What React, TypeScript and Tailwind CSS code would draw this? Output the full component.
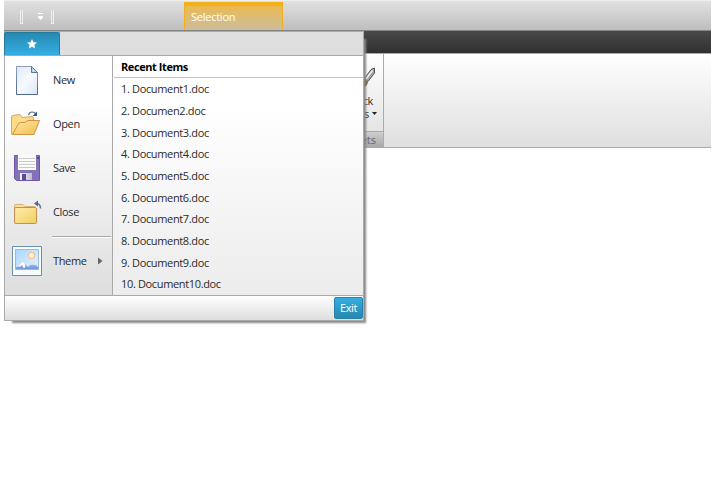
import React from 'react';

const documents = [
  'Document1.doc', 'Documen2.doc', 'Document3.doc', 'Document4.doc', 'Document5.doc',
  'Document6.doc', 'Document7.doc', 'Document8.doc', 'Document9.doc', 'Document10.doc',
];

function NewIcon() {
  return (
    <svg width="32" height="32" viewBox="0 0 32 32">
      <defs>
        <linearGradient id="page" x1="0" y1="0" x2="1" y2="1">
          <stop offset="0" stopColor="#dce8f8" /><stop offset=".5" stopColor="#f7faff" /><stop offset="1" stopColor="#d9e5f6" />
        </linearGradient>
        <linearGradient id="pageEdge" x1="0" y1="0" x2="0" y2="1">
          <stop offset="0" stopColor="#8aa0ba" /><stop offset="1" stopColor="#4d6a8d" />
        </linearGradient>
      </defs>
      <path d="M5.500 2.500H20.500L26.500 8.500V30.500H5.500Z" fill="url(#page)" stroke="url(#pageEdge)" />
      <path d="M20.500 2.500V8.500H26.500Z" fill="#b9daf2" stroke="#5c7898" />
    </svg>
  );
}

function OpenIcon() {
  return (
    <svg width="32" height="32" viewBox="0 0 32 32">
      <defs>
        <linearGradient id="openFront" x1="0" y1="0" x2="1" y2="1">
          <stop offset="0" stopColor="#ffe9a0" /><stop offset="1" stopColor="#f0bd52" />
        </linearGradient>
      </defs>
      <path d="M.500 26V9Q.500 7.500 2 7.500L9 6.500L11 9.500L21 8.500Q22.500 8.500 22.500 11V25Z" fill="#fadb88" stroke="#d8a866" />
      <path d="M1.500 26.500L7 16.500Q8 14.500 10 14.500H14L17 12.500H28.500L23 26.500Z" fill="url(#openFront)" stroke="#cf9448" />
      <path d="M17.500 7Q18.500 4 21 4Q23.500 4 25 6" fill="none" stroke="#5a7596" strokeWidth="1.200" />
      <path d="M26 3.500V8H21.500Z" fill="#39577f" />
    </svg>
  );
}

function SaveIcon() {
  return (
    <svg width="32" height="32" viewBox="0 0 32 32">
      <defs>
        <linearGradient id="disk" x1="0" y1="0" x2="0" y2="1">
          <stop offset="0" stopColor="#8573b9" /><stop offset="1" stopColor="#8370ba" />
        </linearGradient>
        <linearGradient id="shutter" x1="0" y1="0" x2="1" y2="0">
          <stop offset="0" stopColor="#f2f2f5" /><stop offset="1" stopColor="#bdbdc6" />
        </linearGradient>
      </defs>
      <path d="M3.500 3.500H28.500V28.500H5.500L3.500 26.500Z" fill="url(#disk)" stroke="#6d56a9" />
      <path d="M7 3H25V18H7Z" fill="#fafafa" />
      <path d="M8 6.500H24M8 9.500H24M8 12.500H24M8 15.500H24" stroke="#cacacc" />
      <path d="M9 21H21V28H9Z" fill="url(#shutter)" />
      <path d="M11 22H15V28H11Z" fill="#5c4998" />
      <path d="M26 5H28V7H26Z" fill="#58448d" />
    </svg>
  );
}

function CloseIcon() {
  return (
    <svg width="32" height="32" viewBox="0 0 32 32">
      <defs>
        <linearGradient id="closed" x1="0" y1="0" x2="1" y2="1">
          <stop offset="0" stopColor="#ffebaa" /><stop offset="1" stopColor="#f2cf62" />
        </linearGradient>
      </defs>
      <path d="M3.500 27V10Q3.500 8.500 5 8.500H12L14 10.500H24V27Z" fill="#f9dfa0" stroke="#d8b078" />
      <path d="M3.500 13Q3.500 11.500 5 11.500H24.500Q25.500 11.500 25.500 13V26.500Q25.500 27.500 24.500 27.500H4.500Q3.500 27.500 3.500 26.500Z" fill="url(#closed)" stroke="#c78e51" />
      <path d="M29.500 12.500Q29.500 7.500 25 7.500" fill="none" stroke="#5f7897" strokeWidth="1.500" />
      <path d="M27 4.500V10.500L23 7.500Z" fill="#4b6a91" />
    </svg>
  );
}

function ThemeIcon() {
  return (
    <svg width="32" height="32" viewBox="0 0 32 32">
      <defs>
        <linearGradient id="sky" x1="0" y1="0" x2="1" y2="1">
          <stop offset="0" stopColor="#a7d5fb" /><stop offset="1" stopColor="#e9f5fc" />
        </linearGradient>
        <linearGradient id="hill" x1="0" y1="0" x2="0" y2="1">
          <stop offset="0" stopColor="#a9c0e8" /><stop offset="1" stopColor="#7299d9" />
        </linearGradient>
      </defs>
      <path d="M1.500 1.500H30.500V30.500H1.500Z" fill="#f5fdff" stroke="#6d8fae" />
      <path d="M4.500 4.500H27.500V24.500H4.500Z" fill="url(#sky)" stroke="#9ab8e4" />
      <circle cx="20.500" cy="10.500" r="3.200" fill="#fff5c9" stroke="#f6b48f" />
      <path d="M5 24V22.500L11.500 16.500L17 22L22 17L27 22V24Z" fill="url(#hill)" />
      <path d="M11.500 16.500L6 22L9 21.500L11 20L13 23.500L14.500 21L13.500 18.500Z" fill="#fff" />
      <path d="M22 17L18.500 20.500L22 19.500L23 20.500L24.500 19.500Z" fill="#e1eafa" />
    </svg>
  );
}

const commands = [
  { label: 'New', icon: <NewIcon /> },
  { label: 'Open', icon: <OpenIcon /> },
  { label: 'Save', icon: <SaveIcon /> },
  { label: 'Close', icon: <CloseIcon /> },
];

function ApplicationMenu() {
  return (
    <div className="absolute left-[4px] top-[31px] flex h-[290px] w-[360px] flex-col border border-[#a9a9a9] bg-white shadow-[5px_5px_2px_-3px_#888]">
      <div className="flex h-[24px] shrink-0 border-b border-[#a9a9a9] bg-[#dedede]">
        <div className="-ml-px flex h-[23px] w-[56px] items-center justify-center rounded-t-[2px] border border-b-0 border-[#227b9f] bg-linear-to-b from-[#258ab2] to-[#36aee3] pb-px">
          <svg width="10" height="10" viewBox="0 0 10 10"><path d="M5 0L6.500 3.200L10 3.600L7.400 6L8 9.600L5 7.800L2 9.600L2.600 6L0 3.600L3.500 3.200Z" fill="#fff" /></svg>
        </div>
      </div>
      <div className="flex min-h-0 flex-1">
        <div className="flex w-[107px] flex-col bg-linear-to-b from-white from-20% to-[#dedede] pt-[2px]">
          {commands.map(({ label, icon }) => (
            <button key={label} className="flex h-[44px] shrink-0 items-center pl-[6px] text-left">
              {icon}<span className="ml-[10px]">{label}</span>
            </button>
          ))}
          <div className="ml-[47px] mr-px mt-[2px] h-[2px] shrink-0 border-b border-t border-t-[#a7a7a7] border-b-white" />
          <button className="mt-px flex h-[44px] shrink-0 items-center pl-[6px]">
            <ThemeIcon /><span className="ml-[10px]">Theme</span>
            <svg className="ml-auto mr-[9px]" width="5" height="8" viewBox="0 0 5 8"><path d="M0 .5V7.500L4.500 4Z" fill="#666" /></svg>
          </button>
        </div>
        <div className="flex flex-1 flex-col border-l border-[#a9a9a9] bg-linear-to-b from-white from-20% to-[#ececec]">
          <h2 className="ml-px h-[22px] border-b border-[#c2c2c2] pl-[7px] font-bold leading-[22px] tracking-[-0.42px] text-black">Recent Items</h2>
          <ol className="pt-[0.4px]">
            {documents.map((name, index) => (
              <li key={name} className="h-[21.67px] pl-[8px] leading-[21.67px]">{index + 1}. {name}</li>
            ))}
          </ol>
        </div>
      </div>
      <div className="flex h-[25px] shrink-0 justify-end border-t border-[#a9a9a9] bg-linear-to-b from-white to-[#dedede] pt-px">
        <button className="h-[22px] w-[29px] rounded-[2px] border border-[#2584a9] bg-linear-to-b from-[#35aee2] to-[#2687ae] text-white">Exit</button>
      </div>
    </div>
  );
}

export default function App() {
  return (
    <div className="relative h-[500px] w-[715px] overflow-hidden bg-white font-['Open_Sans','Noto_Sans',sans-serif] text-[11px] tracking-[-0.35px] text-[#2b2b2b]">
      <div className="mx-[4px] h-[148px] w-[707px]">
        <header className="flex h-[31px] border-b border-t border-t-[#eee] border-b-[#858585] bg-linear-to-b from-[#e1e1e1] to-[#bebebe]">
          <div className="ml-[16px] mt-[9px] h-[14px] w-[3px] border border-t-0 border-[#eee]" />
          <svg className="ml-[15px] mt-[12px]" width="5" height="7" viewBox="0 0 5 7"><path d="M0 0H5V1H0ZM0 3H5V4.500L2.500 7L0 4.500Z" fill="#fff" /></svg>
          <div className="ml-[8px] mt-[9px] h-[14px] w-[3px] border border-t-0 border-[#eee]" />
          <div className="ml-[130px] mt-px h-[28px] w-[99px] border-x border-t-[4px] border-[#f3b018] bg-linear-to-b from-[#edb94e] to-[#cabd99] pl-[6px] leading-[22px] tracking-[-0.25px] text-white">Selection</div>
        </header>
        <div className="h-[23px] border-b border-b-[#aaa] bg-linear-to-b from-[#494949] to-[#303030]" />
        <main className="flex h-[94px] border-b border-[#aaa] bg-linear-to-b from-white to-[#dfdfdf]">
          <section className="flex w-[380px] flex-col border-r border-[#aaa]">
            <div className="relative flex h-[77px] flex-col items-end justify-end pb-[11px] leading-[13px]">
              <svg className="absolute right-[8px] top-[12px]" width="18" height="24" viewBox="0 0 18 24">
                <path d="M17.500 2V7L11 15.500L7.500 12.500L14 3.500Z" fill="#a5a5a5" stroke="#555" />
                <path d="M15.500 4.500L9 13" stroke="#f0f0f0" strokeWidth="1.500" />
                <path d="M7 13L11 16L10 19Q8 22 3 22Z" fill="#7d5c2e" />
              </svg>
              <span className="mr-[10px]">Quick</span>
              <span className="mr-[6px] flex items-center">Styles<svg className="ml-[3px]" width="5" height="3" viewBox="0 0 5 3"><path d="M0 0H5L2.500 3Z" fill="#222" /></svg></span>
            </div>
            <div className="h-[16px] border-t border-[#aaa] bg-linear-to-b from-[#cecece] to-[#a9a9a9] pr-[7px] text-right leading-[16px] tracking-normal text-[#666]">Sets</div>
          </section>
        </main>
      </div>
      <ApplicationMenu />
    </div>
  );
}
